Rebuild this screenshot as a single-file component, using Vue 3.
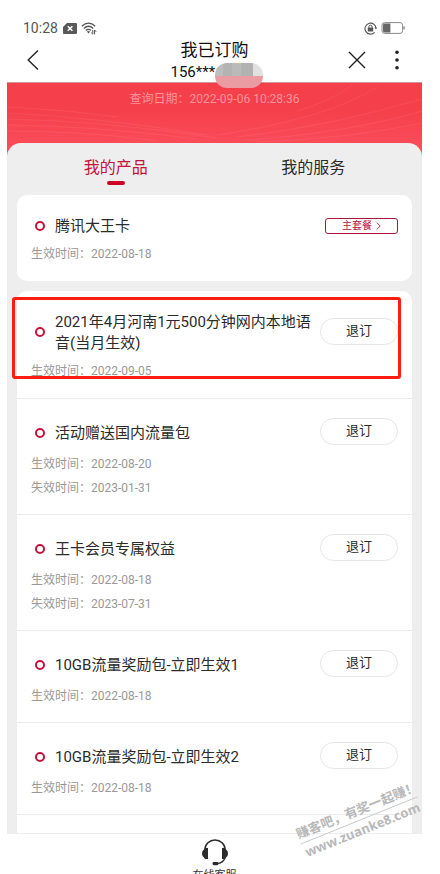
<script setup>
import { ref } from 'vue'

const tabs = ['我的产品', '我的服务']
const active = ref(0)

const mainPlan = { name: '腾讯大王卡', start: '2022-08-18' }

const products = [
  { name: '2021年4月河南1元500分钟网内本地语音(当月生效)', start: '2022-09-05', marked: true },
  { name: '活动赠送国内流量包', start: '2022-08-20', end: '2023-01-31' },
  { name: '王卡会员专属权益', start: '2022-08-18', end: '2023-07-31' },
  { name: '10GB流量奖励包-立即生效1', start: '2022-08-18' },
  { name: '10GB流量奖励包-立即生效2', start: '2022-08-18' }
]
</script>

<template>
  <div class="screen">
    <header class="top">
      <div class="status">
        <span class="time">10:28</span>
        <svg class="sim" viewBox="0 0 14 11" aria-hidden="true">
          <path d="M4 0H13Q14 0 14 1V10Q14 11 13 11H1Q0 11 0 10V4Z" fill="#595959" />
          <path d="M4.8 3.2L9.4 7.8M9.4 3.2L4.8 7.8" stroke="#fff" stroke-width="1.5" />
        </svg>
        <svg class="wifi" viewBox="0 0 16 13" aria-hidden="true" fill="none" stroke="#555" stroke-width="1.3">
          <path d="M0.8 4.2Q7.5 -2 14.2 4.2M2.8 6.4Q7.5 2.2 12.2 6.4M4.8 8.6Q7.5 6.2 10 8.4" />
          <path d="M5.9 9.6L7.5 11.6L9 9.6Q7.5 8.6 5.9 9.6Z" fill="#555" stroke="none" />
          <path d="M11.8 8V12.2L10.2 10.6M13.6 12.4V8L15.2 9.8" stroke-width="1" />
        </svg>
        <svg class="lock" viewBox="0 0 13 13" aria-hidden="true">
          <path d="M10.6 10.3A5.5 5.5 0 1 1 12 6.2" fill="none" stroke="#555" stroke-width="1.1" />
          <path d="M10.4 5.6L12 7.6L13 5.4Z" fill="#555" />
          <rect x="3.8" y="5.6" width="5.4" height="4" rx=".6" fill="#555" />
          <path d="M4.9 5.8V4.8A1.6 1.6 0 0 1 8.1 4.8V5.8" fill="none" stroke="#555" stroke-width="1" />
        </svg>
        <svg class="battery" viewBox="0 0 24 12" aria-hidden="true">
          <rect x="1" y=".6" width="20.6" height="10.8" rx="2.6" fill="#fff" stroke="#888" stroke-width="1" />
          <path d="M3.6 1.6H9.4V10.4H3.6Q2 10.4 2 9V3Q2 1.6 3.6 1.6Z" fill="#666" />
          <rect x="22.4" y="4.4" width="1.2" height="3" fill="#777" />
        </svg>
      </div>
      <div class="nav">
        <button class="icon-btn" aria-label="返回">
          <svg class="back" viewBox="0 0 12 20"><path d="M11 .6L1.2 10L11 19.4" fill="none" stroke="#222" stroke-width="1.4" /></svg>
        </button>
        <div class="heading">
          <h1>我已订购</h1>
          <p class="phone">156***<span class="mosaic"></span></p>
        </div>
        <div class="actions">
          <button class="icon-btn" aria-label="关闭">
            <svg class="close" viewBox="0 0 18 18"><path d="M1 1L17 17M17 1L1 17" stroke="#222" stroke-width="1.4" /></svg>
          </button>
          <button class="icon-btn more-btn" aria-label="更多">
            <svg class="more" viewBox="0 0 4 20" fill="#222"><circle cx="2" cy="2.2" r="1.8" /><circle cx="2" cy="10" r="1.8" /><circle cx="2" cy="17.8" r="1.8" /></svg>
          </button>
        </div>
      </div>
    </header>

    <main class="content">
      <div class="banner">
        <svg class="waves" viewBox="0 0 415 60" preserveAspectRatio="none" aria-hidden="true" fill="none" stroke="#fff" stroke-opacity=".07" stroke-width="1">
          <path d="M0 30Q90 34 200 52M0 36Q100 38 210 55M0 42Q90 43 190 56M0 48Q80 48 150 58M0 24Q60 27 110 34" />
          <path d="M230 54Q320 44 415 16M210 52Q320 36 370 4M240 57Q340 50 415 28M290 28Q325 18 345 2M250 59Q340 56 415 40" />
        </svg>
        <p class="query">查询日期：2022-09-06 10:28:36</p>
      </div>

      <section class="sheet">
        <div class="tabs" role="tablist">
          <button
            v-for="(tab, i) in tabs"
            :key="tab"
            class="tab"
            :class="{ active: active === i }"
            role="tab"
            :aria-selected="active === i"
            @click="active = i"
          >{{ tab }}</button>
        </div>

        <article class="card">
          <div class="row lead">
            <div class="head">
              <span class="ring"></span>
              <h2>{{ mainPlan.name }}</h2>
              <button class="tag">主套餐
                <svg class="chev" viewBox="0 0 5 8"><path d="M.8 .6L4.2 4L.8 7.4" fill="none" stroke="#b5173f" stroke-width=".9" /></svg>
              </button>
            </div>
            <p class="date">生效时间：{{ mainPlan.start }}</p>
          </div>
        </article>

        <article class="card">
          <div v-for="(p, i) in products" :key="p.name" class="row" :class="{ lead: i === 0 }">
            <div class="head">
              <span class="ring"></span>
              <h2>{{ p.name }}</h2>
              <button class="cancel">退订</button>
            </div>
            <p class="date">生效时间：{{ p.start }}</p>
            <p v-if="p.end" class="date">失效时间：{{ p.end }}</p>
            <span v-if="p.marked" class="mark"></span>
          </div>
          <div class="row"></div>
        </article>
      </section>
    </main>

    <footer class="service">
      <a href="#" class="service-link">
        <svg class="headset" viewBox="0 0 26 27" aria-hidden="true">
          <path d="M3 12V10.5A10 9.5 0 0 1 23 10.5V12" fill="none" stroke="#2b2b2b" stroke-width="1.6" />
          <path d="M6 9V20H4Q2.6 20 2 18.5Q0 17.5 0 14.5Q0 11.5 2 10.5Q2.6 9 4 9Z" fill="#2b2b2b" />
          <path d="M20 9V20H22Q23.4 20 24 18.5Q26 17.5 26 14.5Q26 11.5 24 10.5Q23.4 9 22 9Z" fill="#2b2b2b" />
          <path d="M23 19Q21 24 15 24.6" fill="none" stroke="#2b2b2b" stroke-width="1.3" />
          <rect x="10.5" y="23" width="6" height="3.2" rx="1.4" fill="#2b2b2b" />
        </svg>
        <span>在线客服</span>
      </a>
    </footer>

    <div class="watermark">
      <span class="wm-slogan">赚客吧，有奖一起赚！</span>
      <span class="wm-site">www.zuanke8.com</span>
    </div>
  </div>
</template>

<style>
body {
  background: #fff;
}
</style>

<style scoped>
.screen {
  position: relative;
  display: flex;
  flex-direction: column;
  height: 100vh;
  box-sizing: border-box;
  padding: 0 18px 0 7px;
  overflow: hidden;
  background: #fff;
  color: #2b2b2b;
  font-family: Roboto, "Noto Sans CJK SC", sans-serif;
}
h1, h2, p {
  margin: 0;
  font-weight: 400;
}
button {
  margin: 0;
  padding: 0;
  border: 0;
  background: none;
  color: inherit;
  font: inherit;
  cursor: pointer;
}
svg {
  display: block;
}
.top {
  flex: none;
  padding-top: 18px;
}
.status {
  display: flex;
  align-items: center;
  height: 20px;
  padding: 0 17px 0 16px;
  color: #555;
  font-size: 14px;
}
.sim {
  width: 14px;
  height: 11px;
  margin-left: 5px;
}
.wifi {
  width: 16px;
  height: 13px;
  margin-left: 4px;
}
.lock {
  width: 13px;
  height: 13px;
  margin-left: auto;
}
.battery {
  width: 24px;
  height: 12px;
  margin-left: 4px;
}
.nav {
  display: grid;
  grid-template-columns: 80px 1fr 80px;
  align-items: center;
  height: 44px;
}
.icon-btn {
  padding: 0 20px;
}
.back {
  width: 12px;
  height: 20px;
}
.heading {
  display: flex;
  flex-direction: column;
  align-items: center;
}
h1 {
  color: #111;
  font-size: 17px;
  line-height: 24px;
}
.phone {
  position: relative;
  width: 88px;
  color: #111;
  font-size: 15px;
  line-height: 20px;
}
.mosaic {
  position: absolute;
  z-index: 2;
  top: 1px;
  left: 44px;
  width: 48px;
  height: 25px;
  border-radius: 12px;
  background:
    linear-gradient(#0000 52%, #eb9ca2 52%),
    linear-gradient(90deg, #bdbdbd 0 8px, #b3b3b3 8px 17px, #bababa 17px 26px, #b2b2b2 26px 38px, #e3e0e1 38px);
}
.actions {
  display: flex;
  justify-content: flex-end;
  align-items: center;
}
.actions .icon-btn {
  padding: 0;
}
.close {
  width: 18px;
  height: 18px;
}
.actions .more-btn {
  padding: 0 23px 0 29px;
}
.more {
  width: 4px;
  height: 20px;
}
.content {
  flex: 1;
  min-height: 0;
  overflow: hidden;
  background: #fa4d5a;
}
.banner {
  position: relative;
  height: 61px;
  box-sizing: border-box;
  padding-top: 6px;
  border-top: 1px solid #d4939f;
  background: linear-gradient(#f53f4a 40%, #fa4b59);
}
.waves {
  position: absolute;
  inset: 0;
  width: 100%;
  height: 100%;
}
.query {
  position: relative;
  color: #fb949c;
  font-size: 12px;
  line-height: 20px;
  text-align: center;
}
.sheet {
  padding: 0 10px;
  border-radius: 14px 14px 0 0;
  background: #eee;
}
.tabs {
  display: grid;
  grid-template-columns: 1fr 1fr;
  height: 52px;
}
.tab {
  position: relative;
  padding-bottom: 2px;
  font-size: 16px;
  line-height: 24px;
}
.tab.active {
  color: #c2143c;
}
.tab.active::after {
  content: "";
  position: absolute;
  bottom: 10px;
  left: 50%;
  width: 18px;
  height: 4px;
  margin-left: -9px;
  border-radius: 2px;
  background: #cc0022;
}
.card {
  border-radius: 10px;
  background: #fff;
}
.card + .card {
  margin-top: 10px;
}
.row {
  position: relative;
  padding: 22px 14px 14px;
  border-top: 1px solid #ebebeb;
}
.row.lead {
  padding-top: 19px;
  padding-bottom: 15px;
  border-top: 0;
}
.head {
  display: flex;
  align-items: center;
  margin-bottom: 8px;
  padding-left: 4px;
}
.lead .head {
  margin-bottom: 5px;
}
.ring {
  flex: none;
  width: 10px;
  height: 10px;
  box-sizing: border-box;
  margin-right: 10px;
  border: 2px solid #c2143c;
  border-radius: 50%;
}
h2 {
  flex: 1;
  padding-top: 2px;
  font-size: 15px;
  line-height: 21px;
}
.cancel {
  flex: none;
  width: 78px;
  height: 27px;
  box-sizing: border-box;
  margin: -4px 0 -2px 6px;
  padding-bottom: 1px;
  border: 1px solid #e6e6e6;
  border-radius: 14px;
  font-size: 13px;
  line-height: 20px;
}
.tag {
  display: flex;
  align-items: center;
  justify-content: center;
  gap: 4px;
  width: 73px;
  height: 16px;
  box-sizing: border-box;
  border: 1px solid #a8163a;
  border-radius: 3px;
  color: #b5173f;
  font-size: 10px;
  line-height: 14px;
}
.chev {
  width: 5px;
  height: 8px;
}
.date {
  color: #999;
  font-size: 12px;
  line-height: 24px;
}
.mark {
  position: absolute;
  inset: 6px 11px 19px -5px;
  border: 3px solid #ff1c10;
  border-radius: 3px;
  pointer-events: none;
}
.service {
  flex: none;
  height: 41px;
  box-sizing: border-box;
  padding-top: 5px;
  overflow: hidden;
  border-top: 1px solid #eee;
  background: #fff;
}
.service-link {
  display: flex;
  flex-direction: column;
  align-items: center;
  gap: 2px;
  color: #333;
  font-size: 11px;
  line-height: 16px;
  text-decoration: none;
}
.headset {
  width: 26px;
  height: 27px;
}
.watermark {
  position: absolute;
  right: 18px;
  bottom: 35px;
  display: flex;
  flex-direction: column;
  align-items: center;
  width: 126px;
  color: #b8b8b8;
  font-weight: 700;
  white-space: nowrap;
  transform: rotate(-22deg);
  pointer-events: none;
}
.wm-slogan {
  align-self: stretch;
  border-bottom: 1px solid #c4c4c4;
  font-size: 13px;
  line-height: 18px;
}
.wm-site {
  font-family: "Open Sans", sans-serif;
  font-size: 13px;
  line-height: 18px;
}
</style>
